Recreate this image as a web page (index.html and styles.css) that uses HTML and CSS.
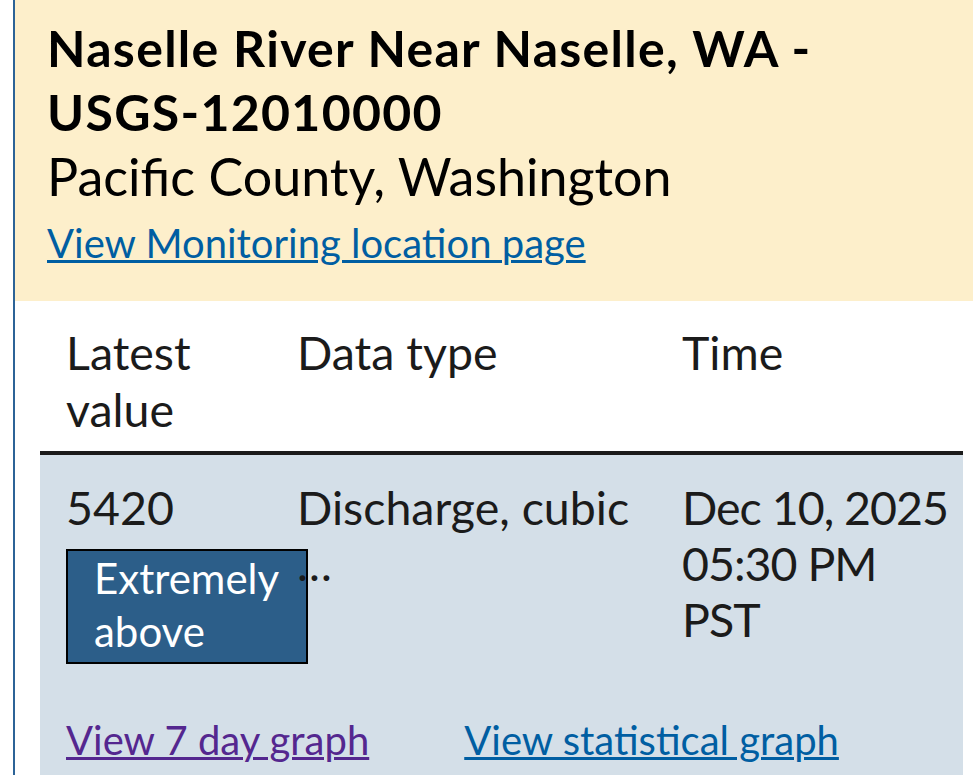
FILE: index.html
```html
<!DOCTYPE html>
<html lang="en">
<head>
<meta charset="utf-8">
<title>Naselle River Near Naselle, WA - USGS-12010000</title>
<link rel="stylesheet" href="styles.css">
</head>
<body>
<div class="popup">
  <div class="site-header">
    <h2 class="site-title">Naselle River Near Naselle, WA - <span class="nowrap">USGS-12010000</span></h2>
    <p class="site-county">Pacific County, Washington</p>
    <p class="site-link-line"><a class="link" href="#">View Monitoring location page</a></p>
  </div>
  <div class="table-wrap">
    <table class="data-table">
      <colgroup>
        <col class="col-value">
        <col class="col-type">
        <col class="col-time">
      </colgroup>
      <thead>
        <tr>
          <th>Latest value</th>
          <th>Data type</th>
          <th>Time</th>
        </tr>
      </thead>
      <tbody>
        <tr class="data-row">
          <td>
            <div class="value">5420</div>
            <span class="badge">Extremely above</span>
          </td>
          <td>
            <div>Discharge, cubic</div>
            <div>…</div>
          </td>
          <td class="time-cell">
            <div>Dec 10, 2025</div>
            <div>05:30 PM</div>
            <div>PST</div>
          </td>
        </tr>
        <tr class="links-row">
          <td colspan="3">
            <div class="graph-links">
              <a class="link link-visited" href="#">View 7 day graph</a>
              <a class="link" href="#">View statistical graph</a>
            </div>
          </td>
        </tr>
      </tbody>
    </table>
  </div>
</div>
</body>
</html>
```
FILE: styles.css
```css
html, body {
  margin: 0;
  padding: 0;
  background: #ffffff;
}

body {
  font-family: Lato, "Noto Sans", sans-serif;
  color: #1b1b1b;
}

.popup {
  margin-left: 13px;
  border-left: 2px solid #2c6397;
  min-height: 775px;
  box-sizing: border-box;
}

.site-header {
  background: #fdefcb;
  padding: 16px 32px 24px 32px;
}

.site-title {
  margin: 0;
  font-size: 50px;
  line-height: 64px;
  font-weight: 700;
  letter-spacing: 1.3px;
  color: #000000;
}

.nowrap {
  white-space: nowrap;
}

.site-county {
  margin: 0;
  font-size: 52px;
  line-height: 65px;
  color: #000000;
}

.site-link-line {
  margin: 0;
  font-size: 40px;
  line-height: 68px;
}

.link {
  color: #005ea2;
  text-decoration: underline;
  text-decoration-thickness: 3px;
}

.link-visited {
  color: #54278f;
}

.table-wrap {
  padding: 0 10px 0 25px;
}

.data-table {
  width: 100%;
  border-collapse: collapse;
  table-layout: fixed;
  font-size: 46.5px;
}

.col-value { width: 231px; }
.col-type { width: 385px; }
.col-time { width: 307px; }

.data-table th {
  text-align: left;
  font-weight: 400;
  vertical-align: top;
  line-height: 57px;
  padding: 23px 0 13px 26px;
  border-bottom: 4px solid #1b1b1b;
}

.data-table td {
  vertical-align: top;
  line-height: 56px;
  padding: 0 0 0 26px;
  background: #d4dfe8;
}

.data-row td {
  padding-top: 24px;
}

.time-cell {
  white-space: nowrap;
  letter-spacing: -1px;
}

.badge {
  display: inline-block;
  vertical-align: top;
  box-sizing: border-box;
  width: 242px;
  margin-top: 14px;
  padding: 1px 26px 4px 26px;
  background: #2c5e89;
  border: 2px solid #000000;
  color: #ffffff;
  font-size: 42px;
  line-height: 53px;
  letter-spacing: 0;
}

.links-row td {
  padding-top: 48px;
  padding-bottom: 10px;
}

.graph-links {
  display: flex;
  gap: 95px;
  font-size: 40px;
  line-height: 57px;
}
```
